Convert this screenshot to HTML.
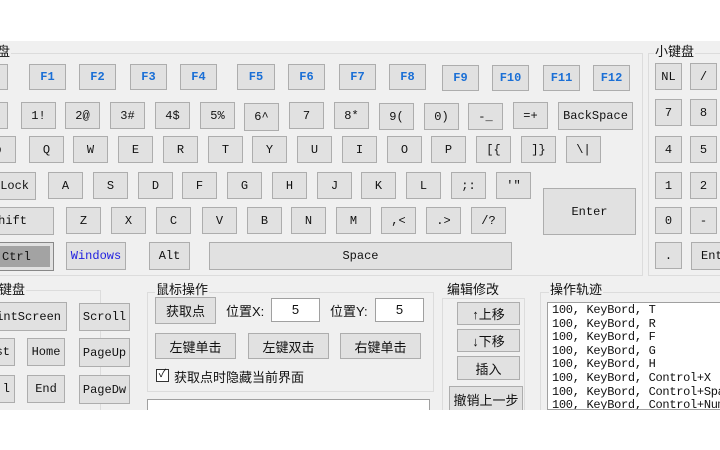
<!DOCTYPE html>
<html><head><meta charset="utf-8"><style>
*{margin:0;padding:0;box-sizing:border-box}
body{width:720px;height:450px;background:#fff;position:relative;overflow:hidden;font-family:"Liberation Mono","Noto Sans CJK SC",monospace;font-size:12px;color:#111}
#bg{position:absolute;left:0;top:41px;width:720px;height:369px;background:#f0f0f0}
.k{position:absolute;background:#e1e1e1;border:1px solid #adadad;display:flex;align-items:center;justify-content:center;white-space:nowrap;overflow:hidden}
.f{color:#1a6fd6;font-weight:bold}
.g{position:absolute;border:1px solid #dcdcdc}
.t{position:absolute;background:#f0f0f0;font-family:"Liberation Sans","Noto Sans CJK SC",sans-serif;font-size:13px;padding:0 1px;line-height:15px}
.c{font-family:"Liberation Sans","Noto Sans CJK SC",sans-serif;font-size:13px}
.w{position:absolute;background:#fff;border:1px solid #a0a0a0}
</style></head><body>
<div id="bg"></div>
<div class="g" style="left:-5px;top:53px;width:648px;height:223px"></div>
<div class="t" style="left:-4px;top:44px">盘</div>
<div class="g" style="left:648px;top:53px;width:80px;height:223px"></div>
<div class="t" style="left:654px;top:44px">小键盘</div>

<div class="k" style="left:-20px;top:64px;width:28px;height:26px"></div>
<div class="k f" style="left:29px;top:64px;width:37px;height:26px">F1</div>
<div class="k f" style="left:79px;top:64px;width:37px;height:26px">F2</div>
<div class="k f" style="left:130px;top:64px;width:37px;height:26px">F3</div>
<div class="k f" style="left:180px;top:64px;width:37px;height:26px">F4</div>
<div class="k f" style="left:237px;top:64px;width:38px;height:26px">F5</div>
<div class="k f" style="left:288px;top:64px;width:37px;height:26px">F6</div>
<div class="k f" style="left:339px;top:64px;width:37px;height:26px">F7</div>
<div class="k f" style="left:389px;top:64px;width:37px;height:26px">F8</div>
<div class="k f" style="left:442px;top:65px;width:37px;height:26px">F9</div>
<div class="k f" style="left:492px;top:65px;width:37px;height:26px">F10</div>
<div class="k f" style="left:543px;top:65px;width:37px;height:26px">F11</div>
<div class="k f" style="left:593px;top:65px;width:37px;height:26px">F12</div>

<div class="k" style="left:-20px;top:102px;width:28px;height:27px"></div>
<div class="k" style="left:21px;top:102px;width:35px;height:27px">1!</div>
<div class="k" style="left:65px;top:102px;width:35px;height:27px">2@</div>
<div class="k" style="left:110px;top:102px;width:35px;height:27px">3#</div>
<div class="k" style="left:155px;top:102px;width:35px;height:27px">4$</div>
<div class="k" style="left:200px;top:102px;width:35px;height:27px">5%</div>
<div class="k" style="left:244px;top:103px;width:35px;height:28px">6^</div>
<div class="k" style="left:289px;top:102px;width:35px;height:27px">7</div>
<div class="k" style="left:334px;top:102px;width:35px;height:27px">8*</div>
<div class="k" style="left:379px;top:103px;width:35px;height:27px">9(</div>
<div class="k" style="left:424px;top:103px;width:35px;height:27px">0)</div>
<div class="k" style="left:468px;top:103px;width:35px;height:27px">-_</div>
<div class="k" style="left:513px;top:102px;width:35px;height:27px">=+</div>
<div class="k" style="left:558px;top:102px;width:75px;height:28px">BackSpace</div>

<div class="k" style="left:-20px;top:136px;width:36px;height:27px">b</div>
<div class="k" style="left:29px;top:136px;width:35px;height:27px">Q</div>
<div class="k" style="left:73px;top:136px;width:35px;height:27px">W</div>
<div class="k" style="left:118px;top:136px;width:35px;height:27px">E</div>
<div class="k" style="left:163px;top:136px;width:35px;height:27px">R</div>
<div class="k" style="left:208px;top:136px;width:35px;height:27px">T</div>
<div class="k" style="left:252px;top:136px;width:35px;height:27px">Y</div>
<div class="k" style="left:297px;top:136px;width:35px;height:27px">U</div>
<div class="k" style="left:342px;top:136px;width:35px;height:27px">I</div>
<div class="k" style="left:387px;top:136px;width:35px;height:27px">O</div>
<div class="k" style="left:431px;top:136px;width:35px;height:27px">P</div>
<div class="k" style="left:476px;top:136px;width:35px;height:27px">[{</div>
<div class="k" style="left:521px;top:136px;width:35px;height:27px">]}</div>
<div class="k" style="left:566px;top:136px;width:35px;height:27px">\|</div>

<div class="k" style="left:-20px;top:172px;width:56px;height:28px;justify-content:flex-end;padding-right:6px">Lock</div>
<div class="k" style="left:48px;top:172px;width:35px;height:27px">A</div>
<div class="k" style="left:93px;top:172px;width:35px;height:27px">S</div>
<div class="k" style="left:138px;top:172px;width:35px;height:27px">D</div>
<div class="k" style="left:182px;top:172px;width:35px;height:27px">F</div>
<div class="k" style="left:227px;top:172px;width:35px;height:27px">G</div>
<div class="k" style="left:272px;top:172px;width:35px;height:27px">H</div>
<div class="k" style="left:317px;top:172px;width:35px;height:27px">J</div>
<div class="k" style="left:361px;top:172px;width:35px;height:27px">K</div>
<div class="k" style="left:406px;top:172px;width:35px;height:27px">L</div>
<div class="k" style="left:451px;top:172px;width:35px;height:27px">;:</div>
<div class="k" style="left:496px;top:172px;width:35px;height:27px">'"</div>
<div class="k" style="left:543px;top:188px;width:93px;height:47px">Enter</div>

<div class="k" style="left:-20px;top:207px;width:74px;height:28px;justify-content:flex-end;padding-right:26px">Shift</div>
<div class="k" style="left:66px;top:207px;width:35px;height:27px">Z</div>
<div class="k" style="left:111px;top:207px;width:35px;height:27px">X</div>
<div class="k" style="left:156px;top:207px;width:35px;height:27px">C</div>
<div class="k" style="left:202px;top:207px;width:35px;height:27px">V</div>
<div class="k" style="left:247px;top:207px;width:35px;height:27px">B</div>
<div class="k" style="left:291px;top:207px;width:35px;height:27px">N</div>
<div class="k" style="left:336px;top:207px;width:35px;height:27px">M</div>
<div class="k" style="left:381px;top:207px;width:35px;height:27px">,&lt;</div>
<div class="k" style="left:426px;top:207px;width:35px;height:27px">.&gt;</div>
<div class="k" style="left:471px;top:207px;width:35px;height:27px">/?</div>

<div class="k" style="left:-20px;top:242px;width:74px;height:29px;border-color:#888;padding:3px"><div style="width:100%;height:100%;background:#a3a3a3;display:flex;align-items:center;padding-left:18px">Ctrl</div></div>
<div class="k" style="left:66px;top:242px;width:60px;height:28px;color:#2020e0">Windows</div>
<div class="k" style="left:149px;top:242px;width:41px;height:28px">Alt</div>
<div class="k" style="left:209px;top:242px;width:303px;height:28px">Space</div>

<div class="k" style="left:655px;top:63px;width:27px;height:27px">NL</div>
<div class="k" style="left:690px;top:63px;width:27px;height:27px">/</div>
<div class="k" style="left:655px;top:99px;width:27px;height:27px">7</div>
<div class="k" style="left:690px;top:99px;width:27px;height:27px">8</div>
<div class="k" style="left:655px;top:136px;width:27px;height:27px">4</div>
<div class="k" style="left:690px;top:136px;width:27px;height:27px">5</div>
<div class="k" style="left:655px;top:172px;width:27px;height:27px">1</div>
<div class="k" style="left:690px;top:172px;width:27px;height:27px">2</div>
<div class="k" style="left:655px;top:207px;width:27px;height:27px">0</div>
<div class="k" style="left:690px;top:207px;width:27px;height:27px">-</div>
<div class="k" style="left:655px;top:242px;width:27px;height:27px">.</div>
<div class="k" style="left:691px;top:242px;width:40px;height:28px;justify-content:flex-start;padding-left:9px">Ent</div>

<div class="g" style="left:-5px;top:290px;width:106px;height:130px"></div>
<div class="t" style="left:-2px;top:282px">键盘</div>
<div class="k" style="left:-20px;top:302px;width:87px;height:29px;justify-content:flex-end;padding-right:5px">intScreen</div>
<div class="k" style="left:79px;top:303px;width:51px;height:28px">Scroll</div>
<div class="k" style="left:-20px;top:338px;width:35px;height:28px;justify-content:flex-end;padding-right:4px">st</div>
<div class="k" style="left:27px;top:338px;width:38px;height:28px">Home</div>
<div class="k" style="left:79px;top:338px;width:51px;height:29px">PageUp</div>
<div class="k" style="left:-20px;top:375px;width:35px;height:28px;justify-content:flex-end;padding-right:4px">l</div>
<div class="k" style="left:27px;top:375px;width:38px;height:28px">End</div>
<div class="k" style="left:79px;top:375px;width:51px;height:29px">PageDw</div>

<div class="g" style="left:147px;top:292px;width:287px;height:100px"></div>
<div class="t" style="left:155px;top:282px">鼠标操作</div>
<div class="k c" style="left:155px;top:297px;width:61px;height:27px">获取点</div>
<div class="c" style="position:absolute;left:226px;top:301px">位置X:</div>
<div class="w c" style="left:271px;top:298px;width:49px;height:24px;text-align:center;line-height:22px">5</div>
<div class="c" style="position:absolute;left:330px;top:301px">位置Y:</div>
<div class="w c" style="left:375px;top:298px;width:49px;height:24px;text-align:center;line-height:22px">5</div>
<div class="k c" style="left:155px;top:333px;width:81px;height:26px">左键单击</div>
<div class="k c" style="left:248px;top:333px;width:81px;height:26px">左键双击</div>
<div class="k c" style="left:340px;top:333px;width:81px;height:26px">右键单击</div>
<div style="position:absolute;left:156px;top:369px;width:13px;height:13px;border:1px solid #333;background:#fff;font-size:11px;line-height:11px;text-align:center">✓</div>
<div class="c" style="position:absolute;left:174px;top:367px">获取点时隐藏当前界面</div>
<div class="w" style="left:147px;top:399px;width:283px;height:20px"></div>

<div class="g" style="left:442px;top:298px;width:83px;height:120px"></div>
<div class="t" style="left:446px;top:282px">编辑修改</div>
<div class="k c" style="left:457px;top:302px;width:63px;height:23px">↑上移</div>
<div class="k c" style="left:457px;top:329px;width:63px;height:23px">↓下移</div>
<div class="k c" style="left:457px;top:356px;width:63px;height:24px">插入</div>
<div class="k c" style="left:449px;top:386px;width:74px;height:26px">撤销上一步</div>

<div class="g" style="left:540px;top:292px;width:200px;height:130px"></div>
<div class="t" style="left:549px;top:282px">操作轨迹</div>
<div class="w" style="left:547px;top:302px;width:180px;height:108px;padding:1px 0 0 4px;font-size:12px;line-height:13.6px;overflow:hidden;white-space:nowrap;letter-spacing:-0.3px">100, KeyBord, T<br>100, KeyBord, R<br>100, KeyBord, F<br>100, KeyBord, G<br>100, KeyBord, H<br>100, KeyBord, Control+X<br>100, KeyBord, Control+Space<br>100, KeyBord, Control+Num8</div>
<div style="position:absolute;left:0;top:410px;width:720px;height:40px;background:#fff"></div>
</body></html>
